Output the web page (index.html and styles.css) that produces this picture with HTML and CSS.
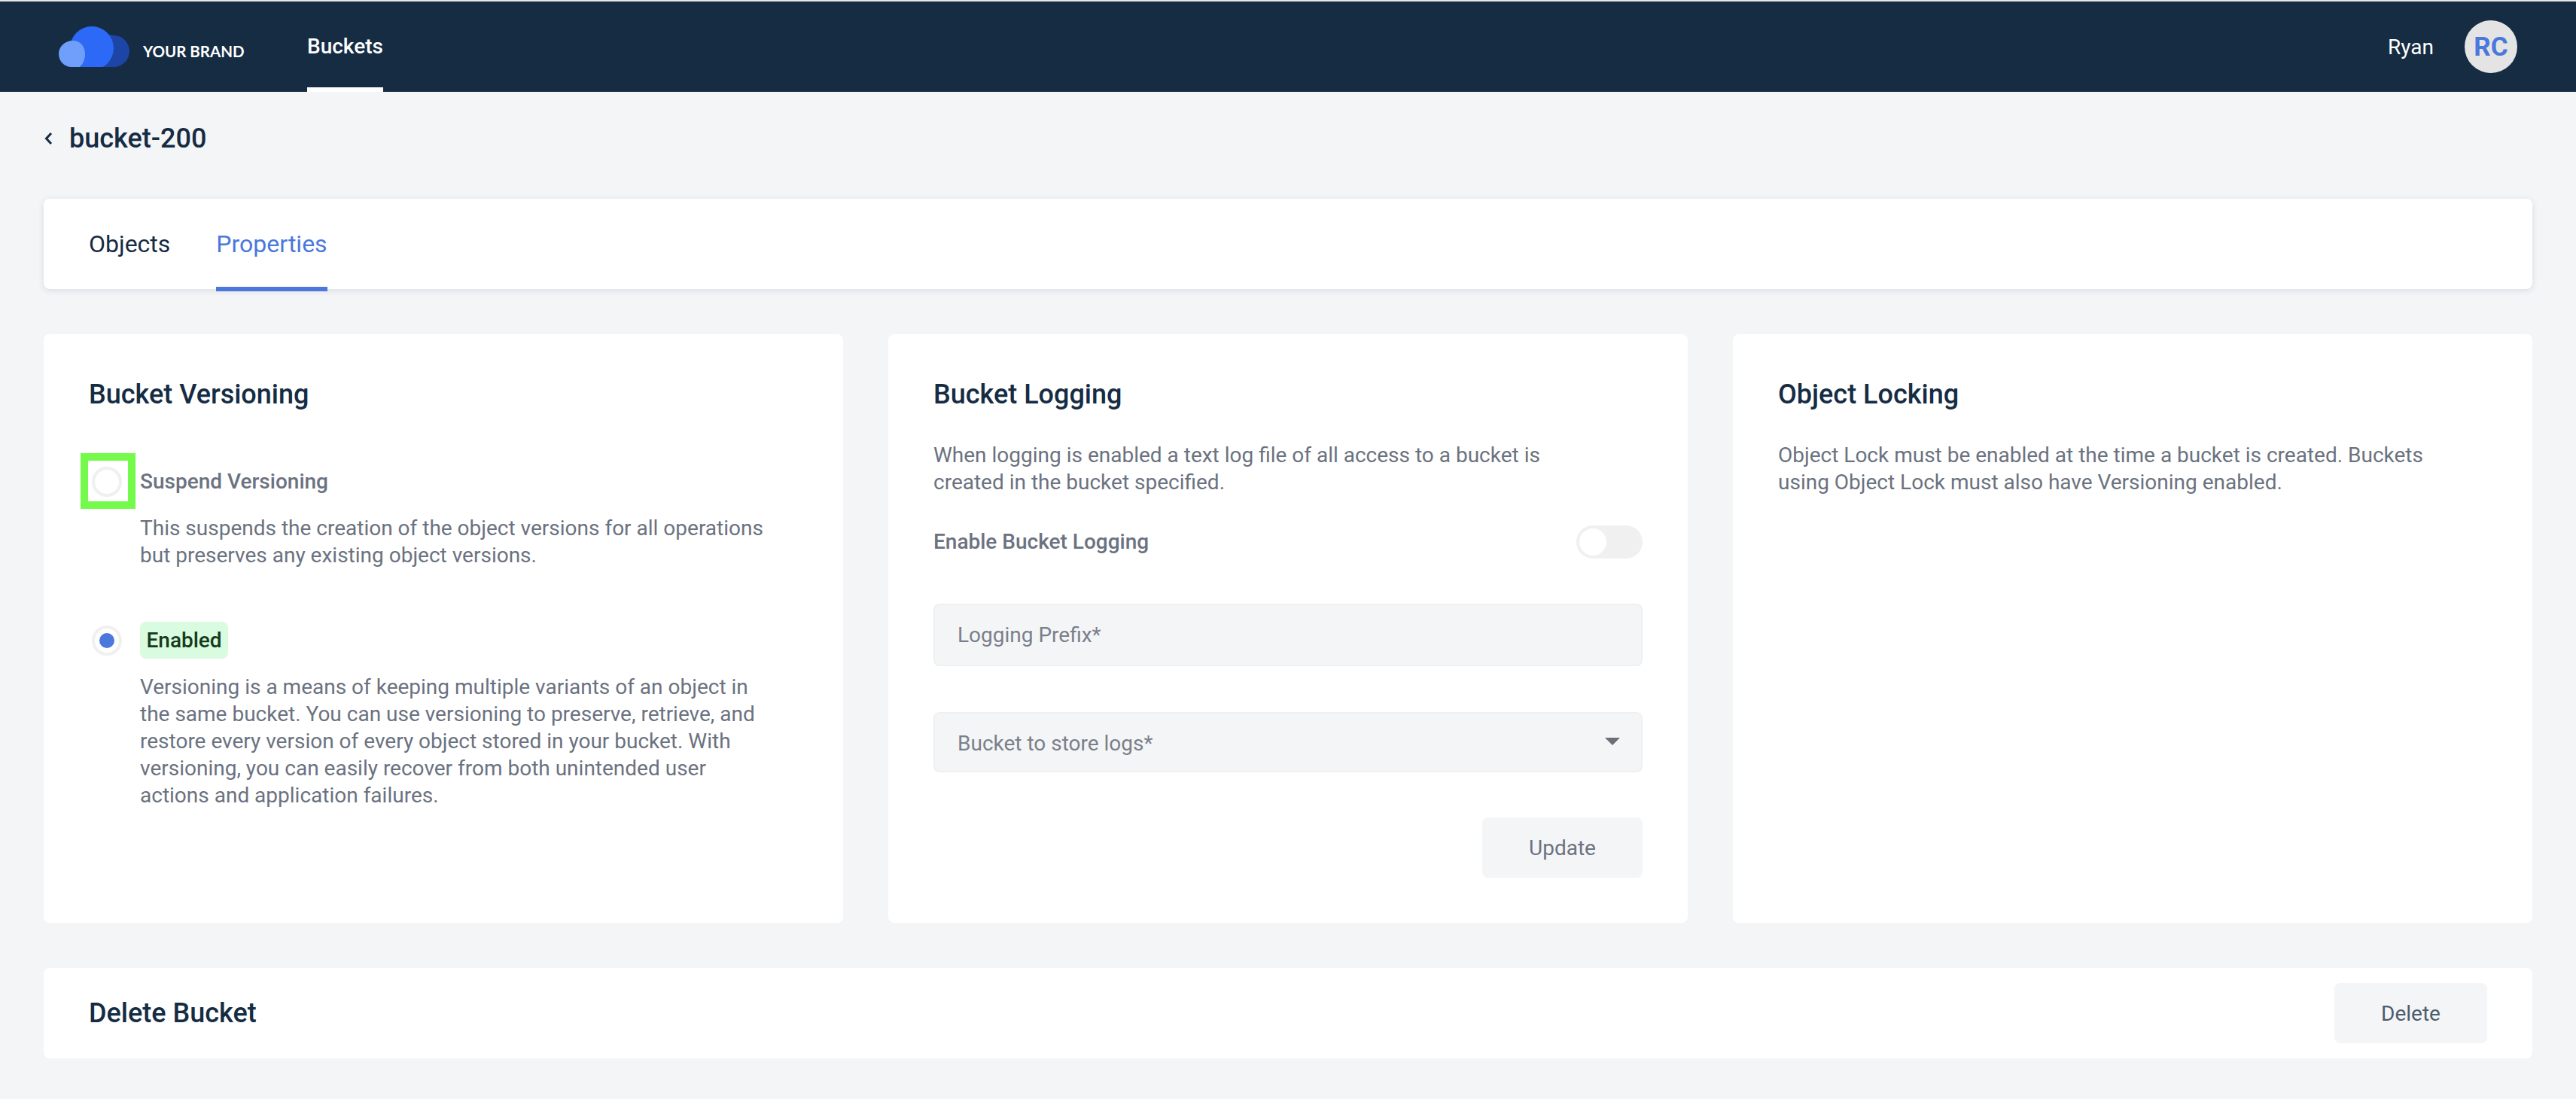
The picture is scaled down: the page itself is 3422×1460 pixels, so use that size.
FILE: index.html
```html
<!DOCTYPE html>
<html lang="en">
<head>
<meta charset="utf-8">
<title>bucket-200</title>
<link rel="stylesheet" href="styles.css">
</head>
<body>
<header class="navbar">
  <div class="brand">
    <svg class="logo" width="94" height="54" viewBox="0 0 94 54">
      <defs><clipPath id="lc"><rect x="0" y="0" width="94" height="54"/></clipPath></defs>
      <path d="M60 12a21 21 0 0 1 13 0a21 21 0 0 1 0 42H50V12z" fill="#1c45a6"/>
      <g clip-path="url(#lc)"><circle cx="44" cy="29" r="29" fill="#2b69f6"/></g>
      <path d="M19 19c10 0 16 8 16 18c0 7-3 13-7 17H17C7 54 0 46 0 36.500S8 19 19 19z" fill="#6f9ffb"/>
    </svg>
    <span class="brand-name">YOUR BRAND</span>
  </div>
  <nav class="nav-tab">Buckets</nav>
  <div class="user">
    <span class="user-name">Ryan</span>
    <span class="avatar">RC</span>
  </div>
</header>
<main class="page">
  <div class="crumb">
    <svg class="chev" width="12" height="18" viewBox="0 0 12 18"><path d="M10 2L3.500 9l6.500 7" fill="none" stroke="#152c43" stroke-width="3"/></svg>
    <h1 class="bucket-name">bucket-200</h1>
  </div>
  <div class="tabs card">
    <span class="tab">Objects</span>
    <span class="tab tab-active">Properties</span>
  </div>
  <section class="columns">
    <article class="card panel">
      <h2 class="panel-title">Bucket Versioning</h2>
      <div class="option option-first">
        <span class="radio"><span class="highlight"></span></span>
        <div class="option-body">
          <div class="option-label">Suspend Versioning</div>
          <p class="desc option-desc">This suspends the creation of the object versions for all operations but preserves any existing object versions.</p>
        </div>
      </div>
      <div class="option option-second">
        <span class="radio radio-on"></span>
        <div class="option-body">
          <div class="badge">Enabled</div>
          <p class="desc option-desc-2">Versioning is a means of keeping multiple variants of an object in the same bucket. You can use versioning to preserve, retrieve, and restore every version of every object stored in your bucket. With versioning, you can easily recover from both unintended user actions and application failures.</p>
        </div>
      </div>
    </article>
    <article class="card panel">
      <h2 class="panel-title">Bucket Logging</h2>
      <p class="desc panel-desc">When logging is enabled a text log file of all access to a bucket is created in the bucket specified.</p>
      <div class="toggle-row">
        <span class="option-label">Enable Bucket Logging</span>
        <span class="toggle"><span class="knob"></span></span>
      </div>
      <div class="field field-input">Logging Prefix*</div>
      <div class="field field-select">
        <span class="select-text">Bucket to store logs*</span>
        <svg class="caret" width="20" height="10" viewBox="0 0 20 10"><path d="M0 0h20L10 10z" fill="#6b6f76"/></svg>
      </div>
      <div class="actions"><span class="btn btn-update">Update</span></div>
    </article>
    <article class="card panel">
      <h2 class="panel-title">Object Locking</h2>
      <p class="desc panel-desc">Object Lock must be enabled at the time a bucket is created. Buckets using Object Lock must also have Versioning enabled.</p>
    </article>
  </section>
  <section class="card delete-row">
    <h2 class="panel-title">Delete Bucket</h2>
    <span class="btn btn-delete">Delete</span>
  </section>
</main>
</body>
</html>
```

FILE: styles.css
```css
* { box-sizing: border-box; }
html, body { margin: 0; padding: 0; }
body {
  height: 1460px;
  overflow: hidden;
  background: #f4f5f7;
  font-family: Roboto, "Liberation Sans", sans-serif;
  font-size: 28px;
  color: #152c43;
}
h1, h2, p { margin: 0; }

.navbar {
  display: flex;
  align-items: stretch;
  height: 122px;
  border-top: 2px solid #e6e6e6;
  background: #152c43;
  color: #fff;
  padding: 0 78px;
}
.brand { display: flex; align-items: flex-start; padding-top: 33px; width: 330px; }
.logo { display: block; flex: none; }
.brand-name {
  margin: 20px 0 0 18px;
  font-family: Lato, sans-serif;
  font-weight: 700;
  font-size: 20.5px;
  line-height: 26px;
  white-space: nowrap;
}
.nav-tab {
  display: flex;
  align-items: center;
  font-weight: 500;
  padding-top: 4px;
  border-bottom: 6px solid #fff;
}
.user { margin-left: auto; display: flex; align-items: center; gap: 41px; }
.user-name { font-weight: 400; }
.avatar {
  width: 70px;
  height: 70px;
  border-radius: 50%;
  background: #e4e4e4;
  color: #4a78dc;
  font-size: 35px;
  font-weight: 700;
  display: flex;
  align-items: center;
  justify-content: center;
}

.page { padding: 0 58px; }
.crumb { display: flex; align-items: center; height: 142px; padding-bottom: 18px; }
.chev { display: block; margin-right: 22px; }
.bucket-name { font-size: 36px; font-weight: 500; line-height: 44px; }

.card { background: #fff; border-radius: 8px; }
.tabs {
  display: flex;
  gap: 61px;
  height: 120px;
  padding: 0 60px;
  box-shadow: 0 2px 8px rgba(20, 40, 70, .12);
}
.tab {
  font-size: 32px;
  line-height: 40px;
  padding-top: 40px;
  height: 123px;
  border-bottom: 6px solid transparent;
}
.tab-active { color: #4a78dc; border-bottom-color: #4a78dc; }

.columns {
  display: grid;
  grid-template-columns: repeat(3, 1fr);
  gap: 60px;
  margin-top: 60px;
}
.panel { height: 782px; padding: 60px 60px 0; }
.panel-title { font-size: 36px; font-weight: 500; line-height: 40px; }
.desc { color: #6b7280; line-height: 36px; }
.panel-desc { margin-top: 43px; width: 880px; }

.option { display: flex; }
.option-first { margin-top: 76px; }
.option-second { margin-top: 70px; }
.radio {
  position: relative;
  flex: none;
  width: 40px;
  height: 40px;
  margin: 0 24px 0 4px;
  border: 4px solid #f0f0f0;
  border-radius: 50%;
  background: #fff;
}
.radio-on { margin-top: 5px; }
.radio-on::after {
  content: "";
  position: absolute;
  left: 6px;
  top: 6px;
  width: 20px;
  height: 20px;
  border-radius: 50%;
  background: #4a78dc;
}
.highlight {
  position: absolute;
  left: -19px;
  top: -22px;
  width: 73px;
  height: 74px;
  border: 10px solid #73fa4b;
}
.option-body { width: 830px; }
.option-label { font-weight: 500; color: #6b7280; line-height: 40px; }
.option-desc { margin-top: 24px; }
.badge {
  display: inline-block;
  height: 49px;
  line-height: 49px;
  padding: 0 8.5px;
  border-radius: 8px;
  background: #d9fbdf;
  color: #163a1c;
  font-weight: 500;
  vertical-align: top;
}
.option-desc-2 { margin-top: 20px; }

.toggle-row { display: flex; justify-content: space-between; align-items: center; margin-top: 39px; height: 44px; }
.toggle {
  position: relative;
  width: 88px;
  height: 44px;
  border-radius: 22px;
  background: #f0f0f0;
}
.knob {
  position: absolute;
  left: 4px;
  top: 4px;
  width: 36px;
  height: 36px;
  border-radius: 50%;
  background: #fff;
}
.field {
  display: flex;
  align-items: center;
  justify-content: space-between;
  padding: 0 28px 0 30px;
  background: #f4f5f7;
  border: 2px solid #eff0f1;
  border-radius: 8px;
  color: #7a808a;
}
.field-input { height: 83px; margin-top: 60px; }
.field-select { height: 80px; margin-top: 61px; }
.select-text { padding-top: 3px; }
.caret { display: block; margin-top: -2px; }
.actions { display: flex; justify-content: flex-end; margin-top: 60px; }
.btn {
  display: flex;
  align-items: center;
  justify-content: center;
  height: 80px;
  background: #f4f5f7;
  border-radius: 8px;
}
.btn-update { width: 213px; color: #6b7280; }
.btn-delete { width: 203px; color: #4f5b6b; }

.delete-row {
  display: flex;
  align-items: center;
  justify-content: space-between;
  height: 120px;
  margin-top: 60px;
  padding: 0 60px;
}
```
